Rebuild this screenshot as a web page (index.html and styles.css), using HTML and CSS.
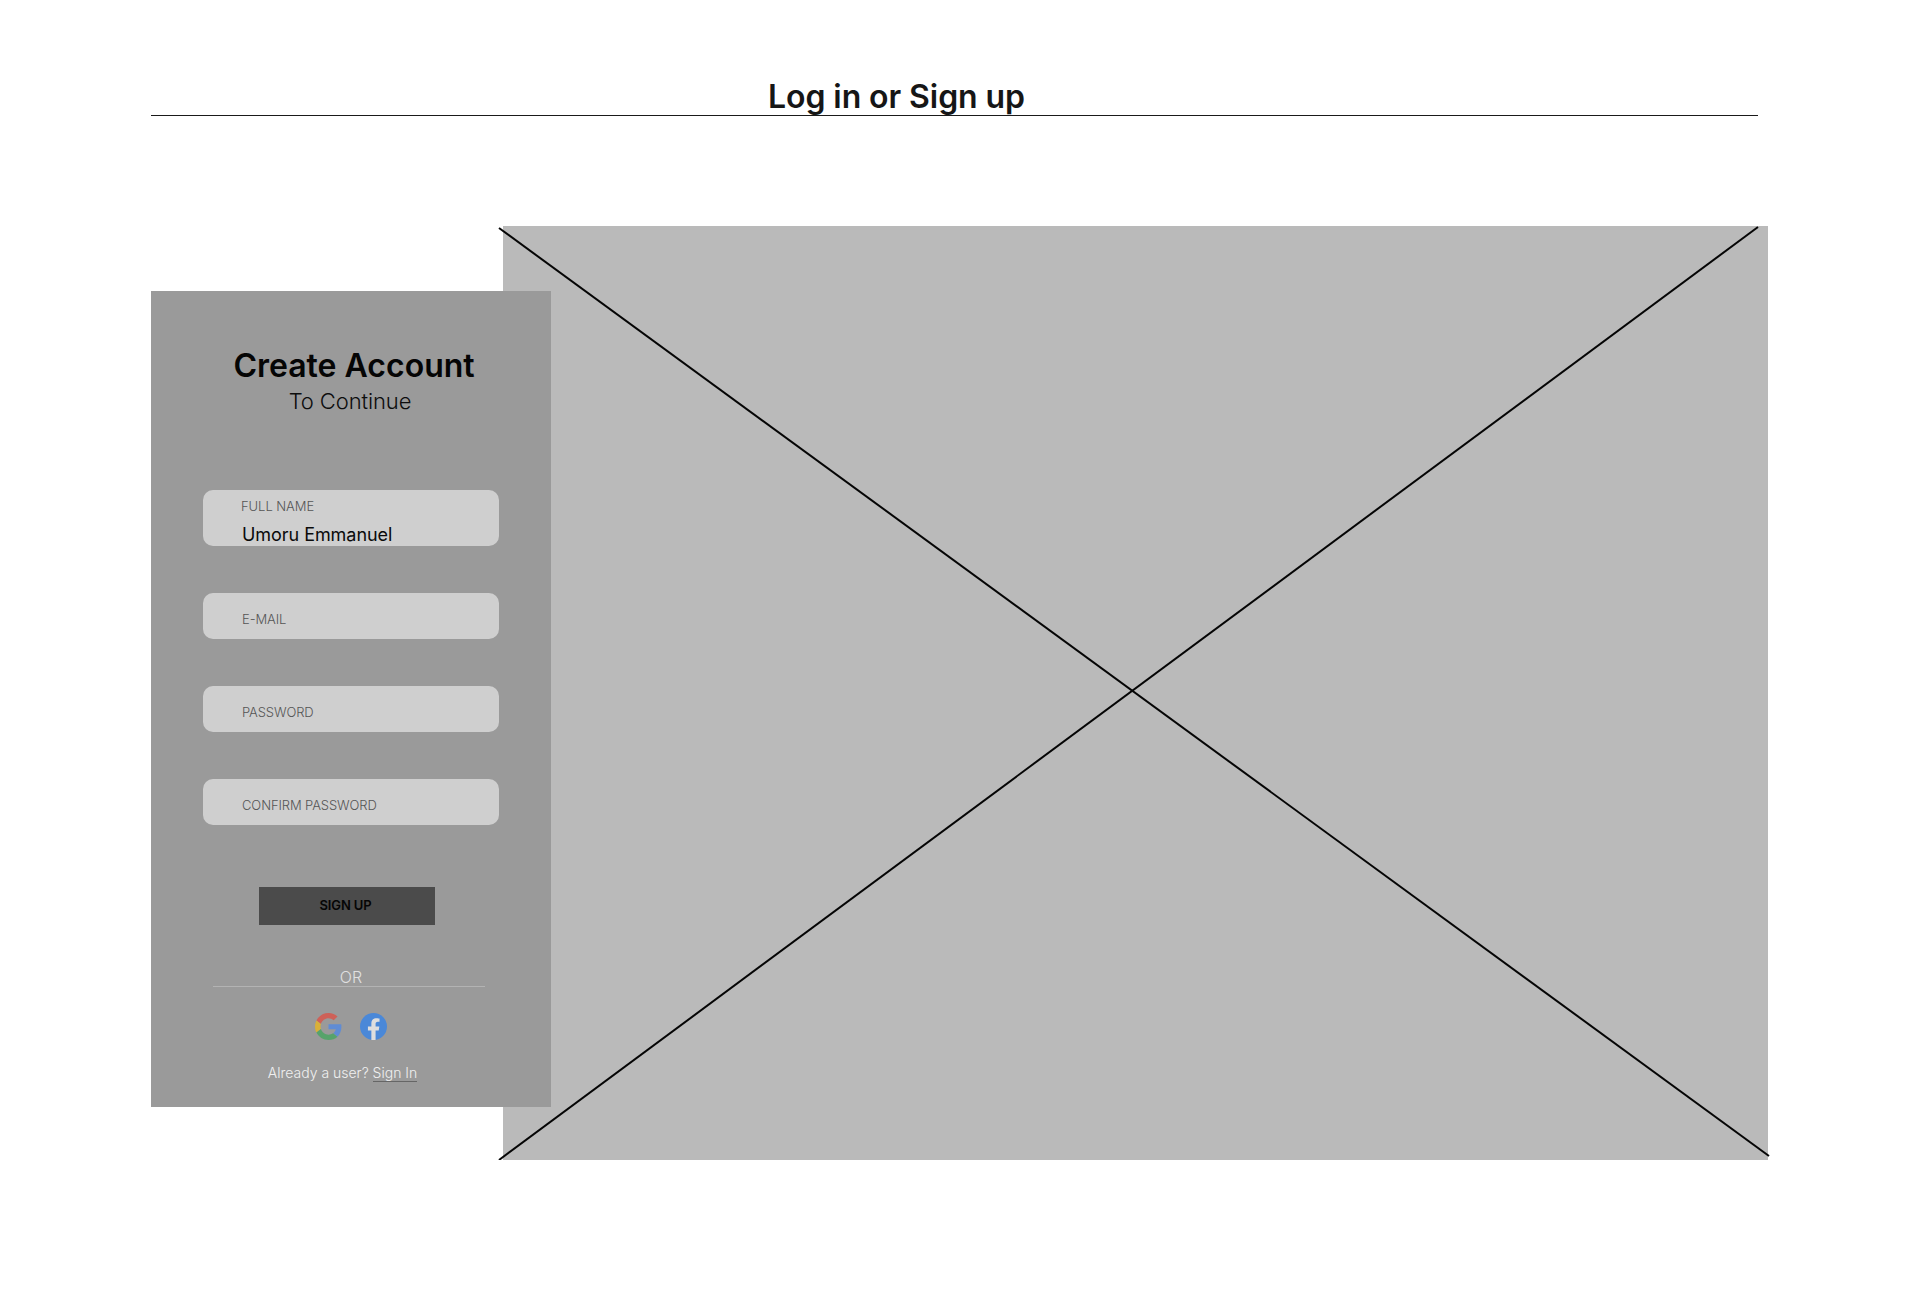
FILE: index.html
```html
<!DOCTYPE html>
<html lang="en">
<head>
    <meta charset="UTF-8">
    <title>Log in or Sign up</title>
    <link rel="stylesheet" href="styles.css">
</head>
<body>
    <h1 class="page-title">Log in or Sign up</h1>
    <div class="stage">
        <form class="signup-card">
            <h2 class="card-title">Create Account</h2>
            <p class="card-subtitle">To Continue</p>

            <div class="field field-filled">
                <label for="fullName">FULL NAME</label>
                <input type="text" id="fullName" value="Umoru Emmanuel">
            </div>
            <div class="field">
                <input type="email" placeholder="E-MAIL">
            </div>
            <div class="field">
                <input type="password" placeholder="PASSWORD">
            </div>
            <div class="field">
                <input type="password" placeholder="CONFIRM PASSWORD">
            </div>

            <button type="button" class="signup-button">SIGN UP</button>

            <div class="divider">OR</div>

            <div class="social-icons">
                <svg class="icon icon-google" viewBox="0 0 48 48">
                    <path fill="#EA4335" d="M24 9.5c3.54 0 6.71 1.22 9.21 3.6l6.85-6.85C35.9 2.38 30.47 0 24 0 14.62 0 6.51 5.38 2.56 13.22l7.98 6.19C12.43 13.72 17.74 9.5 24 9.5z"/>
                    <path fill="#4285F4" d="M46.98 24.55c0-1.57-.15-3.09-.38-4.55H24v9.02h12.94c-.58 2.96-2.26 5.48-4.78 7.18l7.73 6c4.51-4.18 7.09-10.36 7.09-17.65z"/>
                    <path fill="#FBBC05" d="M10.53 28.59c-.48-1.45-.76-2.99-.76-4.59s.27-3.14.76-4.59l-7.98-6.19C.92 16.46 0 20.12 0 24c0 3.88.92 7.54 2.56 10.78l7.97-6.19z"/>
                    <path fill="#34A853" d="M24 48c6.48 0 11.93-2.13 15.89-5.81l-7.73-6c-2.15 1.45-4.92 2.3-8.16 2.3-6.26 0-11.57-4.22-13.47-9.91l-7.98 6.19C6.51 42.62 14.62 48 24 48z"/>
                </svg>
                <svg class="icon" viewBox="0 0 48 48">
                    <circle cx="24" cy="24" r="24" fill="#4a88d8"/>
                    <path fill="#dedede" d="M33.3 31l1.100-7h-6.700v-4.500c0-1.900.9-3.800 4-3.800h3v-6s-2.800-.5-5.400-.5c-5.500 0-9.100 3.300-9.100 9.400V24h-6.100v7h6.100v17a24 24 0 0 0 7.500 0V31z"/>
                </svg>
            </div>

            <p class="signin-text">Already a user? <a href="#" class="signin-link">Sign In</a></p>
        </form>

        <div class="placeholder-image">
            <svg class="cross" viewBox="0 0 1265 934">
                <line x1="-4" y1="2" x2="1266" y2="930"/>
                <line x1="-4" y1="934" x2="1255" y2="1"/>
            </svg>
        </div>
    </div>
</body>
</html>
```

FILE: styles.css
```css
body {
    font-family: 'Inter', sans-serif;
    background-color: #fff;
    margin: 0;
    padding: 0 0 0 151px;
}

.page-title {
    width: 1607px;
    box-sizing: border-box;
    height: 116px;
    margin: 0;
    padding-top: 78px;
    padding-left: 617px;
    border-bottom: 1px solid #1a1a1a;
    font-size: 32px;
    font-weight: 600;
    letter-spacing: -0.08px;
    line-height: 38px;
    color: #161616;
}

.stage {
    display: flex;
    align-items: flex-start;
    margin-top: 110px;
}

.signup-card {
    position: relative;
    z-index: 1;
    flex: none;
    display: flex;
    flex-direction: column;
    box-sizing: border-box;
    width: 400px;
    height: 816px;
    margin-top: 65px;
    margin-right: -48px;
    padding-top: 56px;
    background-color: #9a9a9a;
}

.card-title {
    margin: 0 0 0 6px;
    font-size: 32px;
    font-weight: 600;
    line-height: 38px;
    text-align: center;
    color: #050505;
}

.card-subtitle {
    margin: 1px 0 0 -2px;
    font-size: 22px;
    font-weight: 300;
    letter-spacing: -0.1px;
    line-height: 30px;
    text-align: center;
    color: #0d0d0d;
}

.field {
    display: flex;
    flex-direction: column;
    justify-content: center;
    box-sizing: border-box;
    width: 296px;
    height: 46px;
    margin: 47px 0 0 52px;
    background-color: #cfcfcf;
    border-radius: 10px;
}

.field-filled {
    height: 56px;
    margin-top: 74px;
    justify-content: flex-start;
}

.field label {
    margin: 8px 0 0 38px;
    font-size: 13px;
    font-weight: 300;
    letter-spacing: -0.05px;
    line-height: 16px;
    color: #555;
}

.field input {
    position: relative;
    top: 3px;
    width: 250px;
    padding: 0 0 0 39px;
    border: none;
    outline: none;
    background: transparent;
    font-family: 'Inter', sans-serif;
    font-size: 13px;
    font-weight: 300;
    letter-spacing: -0.1px;
    line-height: 16px;
}

.field input::placeholder {
    color: #555;
    opacity: 1;
}

.field-filled input {
    top: 0;
    margin-top: 10px;
    font-size: 18px;
    font-weight: 400;
    letter-spacing: -0.05px;
    line-height: 22px;
    color: #0a0a0a;
}

.signup-button {
    width: 176px;
    height: 38px;
    margin: 62px 0 0 108px;
    padding: 0 3px 2px 0;
    border: none;
    background-color: #4b4b4b;
    font-family: 'Inter', sans-serif;
    font-size: 13px;
    font-weight: 600;
    letter-spacing: -0.1px;
    color: #050505;
}

.divider {
    width: 272px;
    margin: 43px 0 0 62px;
    padding-left: 4px;
    box-sizing: border-box;
    border-bottom: 1px solid #b3b3b3;
    font-size: 16px;
    font-weight: 300;
    line-height: 18px;
    text-align: center;
    color: #e0e0e0;
}

.social-icons {
    display: flex;
    gap: 18px;
    margin: 26px 0 0 164px;
}

.icon {
    width: 27px;
    height: 27px;
}

.icon-google {
    opacity: 0.65;
}

.signin-text {
    margin: 24px 0 0 0;
    padding-right: 17px;
    font-size: 14px;
    font-weight: 300;
    line-height: 18px;
    text-align: center;
    color: #f0f0f0;
}

.signin-link {
    color: #f0f0f0;
    text-decoration: none;
    border-bottom: 1px solid #666;
}

.placeholder-image {
    position: relative;
    flex: none;
    width: 1265px;
    height: 934px;
    background-color: #bababa;
}

.cross {
    position: absolute;
    inset: 0;
    width: 100%;
    height: 100%;
    overflow: visible;
}

.cross line {
    stroke: #050505;
    stroke-width: 2;
}
```
